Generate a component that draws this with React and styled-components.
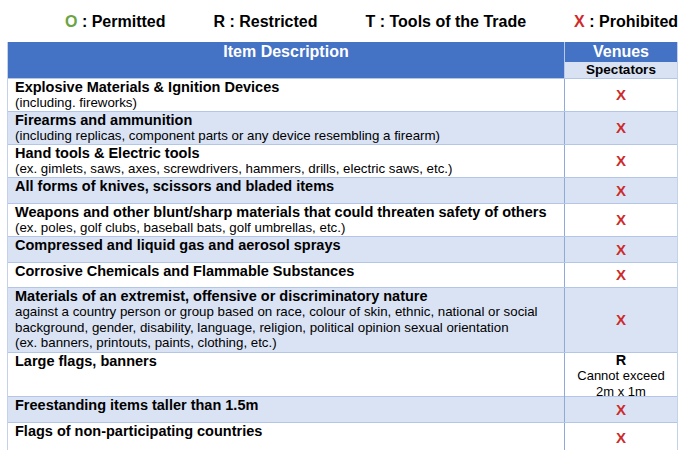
import React from "react";
import styled, { createGlobalStyle } from "styled-components";

const GlobalStyle = createGlobalStyle`
  html, body { margin: 0; padding: 0; background: #ffffff; }
  body { font-family: "Liberation Sans", Arial, sans-serif; color: #000; overflow: hidden; }
`;

const Page = styled.div`
  width: 686px;
  height: 450px;
  padding-left: 7px;
  box-sizing: border-box;
`;

const Legend = styled.div`
  display: flex;
  gap: 48px;
  height: 42px;
  box-sizing: border-box;
  padding: 13px 0 0 58px;
  font-size: 16px;
  font-weight: bold;
  line-height: 18px;
  white-space: nowrap;
`;

const Key = styled.span`
  color: ${(p) => p.$color};
`;

const Table = styled.div`
  width: 671px;
  border-left: 1px solid #c3d1ea;
  border-right: 1px solid #c3d1ea;
  box-sizing: border-box;
`;

const HeaderRow = styled.div`
  display: grid;
  grid-template-columns: 557px 112px;
  height: 36px;
`;

const HeaderMain = styled.div`
  background: #4472c4;
  color: #fff;
  font-size: 16px;
  font-weight: bold;
  text-align: center;
  line-height: 20px;
  border-right: 1px solid #b7c8e8;
`;

const HeaderSide = styled.div`
  display: grid;
  grid-template-rows: 20px 16px;
`;

const Venues = styled.div`
  background: #4472c4;
  color: #fff;
  font-size: 16px;
  font-weight: bold;
  text-align: center;
  line-height: 20px;
`;

const Spectators = styled.div`
  background: #d9e2f3;
  font-size: 13.5px;
  font-weight: bold;
  text-align: center;
  line-height: 16px;
`;

const Row = styled.div`
  display: grid;
  grid-template-columns: 557px 112px;
  height: ${(p) => p.$h}px;
  box-sizing: border-box;
  background: ${(p) => (p.$shaded ? "#dae3f3" : "#ffffff")};
  border-top: 1px solid #b4c6e7;
`;

const Desc = styled.div`
  padding: 0 0 0 7px;
  border-right: 1px solid #8eaadb;
  white-space: nowrap;
  overflow: visible;
`;

const Title = styled.div`
  font-size: 14.5px;
  font-weight: bold;
  line-height: 16px;
`;

const Sub = styled.div`
  font-size: 13.3px;
  line-height: 15.7px;
`;

const Venue = styled.div`
  display: flex;
  flex-direction: column;
  align-items: center;
  justify-content: center;
  text-align: center;
`;

const Mark = styled.span`
  color: #cc2b2b;
  font-size: 15px;
  font-weight: bold;
  line-height: 16px;
`;

const RMark = styled.span`
  font-size: 14.5px;
  font-weight: bold;
  line-height: 15px;
`;

const Note = styled.span`
  font-size: 13px;
  line-height: 15.5px;
`;

const rows = [
  { t: "Explosive Materials & Ignition Devices", s: ["(including. fireworks)"], h: 33 },
  { t: "Firearms and ammunition", s: ["(including replicas, component parts or any device resembling a firearm)"], h: 33 },
  { t: "Hand tools & Electric tools", s: ["(ex. gimlets, saws, axes, screwdrivers, hammers, drills, electric saws, etc.)"], h: 33 },
  { t: "All forms of knives, scissors and bladed items", s: [], h: 26 },
  { t: "Weapons and other blunt/sharp materials that could threaten safety of others", s: ["(ex. poles, golf clubs, baseball bats, golf umbrellas, etc.)"], h: 33 },
  { t: "Compressed and liquid gas and aerosol sprays", s: [], h: 26 },
  { t: "Corrosive Chemicals and Flammable Substances", s: [], h: 25 },
  {
    t: "Materials of an extremist, offensive or discriminatory nature",
    s: [
      "against a country person or group based on race, colour of skin, ethnic, national or social",
      "background, gender, disability, language, religion, political opinion sexual orientation",
      "(ex. banners, printouts, paints, clothing, etc.)",
    ],
    h: 65,
  },
  { t: "Large flags, banners", s: [], h: 44, restricted: true },
  { t: "Freestanding items taller than 1.5m", s: [], h: 26 },
  { t: "Flags of non-participating countries", s: [], h: 30 },
];

export default function App() {
  return (
    <Page>
      <GlobalStyle />
      <Legend>
        <span>
          <Key $color="#6aa443">O</Key> : Permitted
        </span>
        <span>R : Restricted</span>
        <span>T : Tools of the Trade</span>
        <span>
          <Key $color="#d02a2a">X</Key> : Prohibited
        </span>
      </Legend>
      <Table>
        <HeaderRow>
          <HeaderMain>Item Description</HeaderMain>
          <HeaderSide>
            <Venues>Venues</Venues>
            <Spectators>Spectators</Spectators>
          </HeaderSide>
        </HeaderRow>
        {rows.map((r, i) => (
          <Row key={i} $h={r.h} $shaded={i % 2 === 1}>
            <Desc>
              <Title>{r.t}</Title>
              {r.s.map((line, j) => (
                <Sub key={j}>{line}</Sub>
              ))}
            </Desc>
            <Venue>
              {r.restricted ? (
                <>
                  <RMark>R</RMark>
                  <Note>Cannot exceed</Note>
                  <Note>2m x 1m</Note>
                </>
              ) : (
                <Mark>X</Mark>
              )}
            </Venue>
          </Row>
        ))}
      </Table>
    </Page>
  );
}
